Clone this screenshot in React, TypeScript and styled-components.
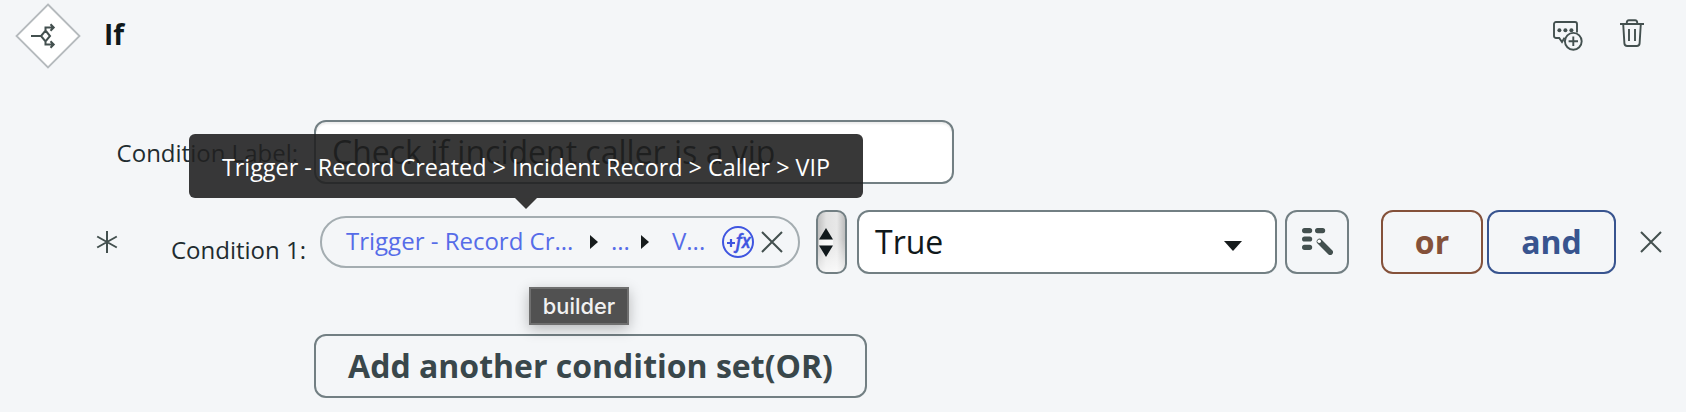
import React from 'react';
import styled, { createGlobalStyle } from 'styled-components';

const GlobalStyle = createGlobalStyle`
  body { margin: 0; background: #f4f6f8; }
  *, *::before, *::after { box-sizing: border-box; }
  button, input { font-family: inherit; }
`;

const Panel = styled.main`
  width: 1686px;
  height: 412px;
  overflow: hidden;
  background: #f4f6f8;
  color: #1f2c30;
  font: 24px/32px 'Open Sans', 'Noto Sans', sans-serif;
  white-space: nowrap;
`;

const Header = styled.header`
  display: flex;
  align-items: center;
  height: 72px;
  padding: 0 42px 0 15px;
`;

const Title = styled.h2`
  margin: -5px auto 0 23px;
  font-size: 28px;
  line-height: 38px;
  font-weight: 700;
  color: #10181b;
`;

const IconButton = styled.button<{ $gap?: number; $top?: number }>`
  display: flex;
  margin: 0 0 0 ${(p) => p.$gap ?? 0}px;
  padding: ${(p) => p.$top ?? 0}px 0 0;
  border: 0;
  background: none;
  color: #43504f;
`;

const HeaderActions = styled.div`
  display: flex;
  align-items: flex-start;
  height: 36px;
`;

const LabelRow = styled.div`
  display: flex;
  align-items: center;
  height: 64px;
  margin-top: 48px;
`;

const FieldLabel = styled.label<{ $width: number; $shift?: number }>`
  width: ${(p) => p.$width}px;
  margin-top: ${(p) => p.$shift ?? 0}px;
  text-align: right;
`;

const TextInput = styled.input`
  width: 640px;
  height: 64px;
  margin-left: 16px;
  padding: 0 16px 2px;
  border: 2px solid #727f83;
  border-radius: 12px;
  background: #fff;
  box-shadow: inset 0 2px 2px rgba(0, 0, 0, 0.08);
  color: #10181b;
  font-size: 32px;
`;

const ConditionRow = styled.div`
  display: flex;
  align-items: center;
  height: 64px;
  margin-top: 26px;
  padding-left: 96px;
`;

const Pill = styled.div`
  position: relative;
  display: flex;
  align-items: center;
  width: 480px;
  height: 52px;
  margin: -1px 0 0 14px;
  padding-left: 24px;
  border: 2px solid #a4adb1;
  border-radius: 26px;
`;

const Crumb = styled.span<{ $width: number }>`
  width: ${(p) => p.$width}px;
  margin-top: -2px;
  color: #566ce8;
`;

const PathArrow = styled.i<{ $after: number }>`
  margin-right: ${(p) => p.$after}px;
  border: solid transparent;
  border-width: 7px 0 7px 8px;
  border-left-color: #161b1c;
`;

const PathTooltip = styled.div`
  position: absolute;
  left: -133px;
  bottom: 68px;
  width: 674px;
  height: 64px;
  padding-top: 17px;
  border-radius: 6px;
  background: rgba(32, 32, 32, 0.895);
  color: #fff;
  font-size: 23.35px;
  text-align: center;

  &::after {
    content: '';
    position: absolute;
    top: 64px;
    left: 326px;
    border: solid transparent;
    border-width: 11px 11px 0;
    border-top-color: #373737;
  }
`;

const NativeHint = styled.div`
  position: absolute;
  left: 207px;
  top: 69px;
  width: 100px;
  height: 38px;
  border: 2px solid #6f6f6f;
  background: #515151;
  box-shadow: 0 4px 14px rgba(0, 0, 0, 0.26);
  color: #f1f1f1;
  font: 500 21.8px/34px Inter, sans-serif;
  text-align: center;
`;

const OperatorSelect = styled.div`
  display: flex;
  align-items: center;
  width: 31px;
  height: 64px;
  margin-left: 16px;
  padding-left: 1px;
  border: 2px solid #727f83;
  border-radius: 10px;
  background:
    linear-gradient(rgba(255, 255, 255, 0) 45%, rgba(255, 255, 255, 0.75)),
    linear-gradient(90deg, #bfbfbf, #e2e2e2 30%, #e8e8e8 70%, #bdbdbd);
`;

const ValueSelect = styled.div`
  display: flex;
  align-items: center;
  justify-content: space-between;
  width: 420px;
  height: 64px;
  margin-left: 10px;
  padding: 0 33px 0 16px;
  border: 2px solid #727f83;
  border-radius: 12px;
  background: #fff;
  color: #10181b;
  font-size: 32px;
`;

const Caret = styled.i`
  margin-top: 7px;
  border: solid transparent;
  border-width: 10px 9px 0;
  border-top-color: #161b1c;
`;

const OutlineButton = styled.button<{ $width: number; $color: string; $border: string; $left: number }>`
  display: flex;
  align-items: center;
  justify-content: center;
  width: ${(p) => p.$width}px;
  height: 64px;
  margin: 0 0 0 ${(p) => p.$left}px;
  padding: 0 0 2px;
  border: 2px solid ${(p) => p.$border};
  border-radius: 12px;
  background: none;
  color: ${(p) => p.$color};
  font-size: 32px;
  font-weight: 700;
`;

const Footer = styled.div`
  margin-top: 60px;
`;

const Cross = ({ size = 22 }: { size?: number }) => (
  <svg width={size} height={size} viewBox="0 0 22 22" fill="none" stroke="#43504f" strokeWidth="2">
    <path d="M1 1 21 21M21 1 1 21" />
  </svg>
);

const FlowIcon = () => (
  <svg width="66" height="66" viewBox="0 0 66 66" fill="none">
    <path d="M33 1.5 64.5 33 33 64.5 1.5 33Z" fill="#fff" stroke="#b5babd" strokeWidth="1.8" />
    <g stroke="#43504f" strokeWidth="2">
      <path d="M16 33H26M30.5 27.5 35 33 30.5 38.5 26 33ZM30.5 28V24.5H38M30.5 38V41.5H38M35.5 21.3 38.7 24.5 35.5 27.7M35.5 38.3 38.7 41.5 35.5 44.7" />
    </g>
  </svg>
);

const CommentIcon = () => (
  <svg width="30" height="30" viewBox="0 0 30 30" fill="none" stroke="#43504f" strokeWidth="1.9">
    <path d="M11.5 16.8 9 21 6.2 17H3A2 2 0 0 1 1 15V3A2 2 0 0 1 3 1H22A2 2 0 0 1 24 3V11.5" />
    <circle cx="20.3" cy="20.3" r="8.4" />
    <path d="M20.3 15.6V25M15.6 20.3H25" />
    <g fill="#43504f" stroke="none">
      <circle cx="6.4" cy="9.3" r="2" />
      <circle cx="12.4" cy="9.3" r="2" />
      <circle cx="18.4" cy="9.3" r="2" />
    </g>
  </svg>
);

const TrashIcon = () => (
  <svg width="24" height="29" viewBox="0 0 24 29" fill="none" stroke="#43504f" strokeWidth="1.9">
    <path d="M0 5H24M6.8 5V3.5A2.3 2.3 0 0 1 9 1.2H15A2.3 2.3 0 0 1 17.2 3.5V5M3.2 5 4.4 24.4A2.8 2.8 0 0 0 7.2 27H16.8A2.8 2.8 0 0 0 19.6 24.4L20.8 5M9 10V22M15 10V22" />
  </svg>
);

const RequiredIcon = () => (
  <svg width="22" height="22" viewBox="0 0 22 22" stroke="#43504f" strokeWidth="2">
    <path d="M11 0V22M1.2 5.5 20.8 16.5M20.8 5.5 1.2 16.5" />
  </svg>
);

const FormulaIcon = () => (
  <svg width="32" height="32" viewBox="0 0 32 32">
    <circle cx="16" cy="16" r="15" fill="none" stroke="#3f55e0" strokeWidth="2" />
    <path d="M5 17H13M9 13V21" stroke="#3f55e0" strokeWidth="2.2" />
    <text x="13.8" y="21.8" fill="#3f55e0" stroke="#3f55e0" strokeWidth="0.4" fontFamily="Open Sans, sans-serif" fontSize="19" fontWeight="600" fontStyle="italic" textLength="15" lengthAdjust="spacingAndGlyphs">fx</text>
  </svg>
);

const StepperArrows = () => (
  <svg width="14" height="29" viewBox="0 0 14 29">
    <rect y="11.5" width="14" height="6" fill="#fff" opacity=".7" />
    <path d="M0 11.5 7 0 14 11.5ZM0 17.5H14L7 29Z" fill="#10181b" />
  </svg>
);

const WandIcon = () => (
  <svg width="31" height="27" viewBox="0 0 31 27" fill="none" stroke="#43504f" strokeLinecap="round">
    <path d="M2.6 2.6H7.6M15.6 2.6H20.6M2.6 11H7.6M2.6 19.3H7.6" strokeWidth="5.2" />
    <path d="M17.5 13.5 28.2 24.2" strokeWidth="5.6" />
    <circle cx="17.2" cy="13.2" r="1.8" fill="#fff" stroke="none" />
  </svg>
);

export default function App() {
  return (
    <Panel>
      <GlobalStyle />
      <Header>
        <FlowIcon />
        <Title>If</Title>
        <HeaderActions>
          <IconButton aria-label="Add comment" $top={3}><CommentIcon /></IconButton>
          <IconButton aria-label="Delete" $gap={37} $top={1}><TrashIcon /></IconButton>
        </HeaderActions>
      </Header>

      <LabelRow>
        <FieldLabel $width={298} $shift={1}>Condition Label:</FieldLabel>
        <TextInput defaultValue="Check if incident caller is a vip" />
      </LabelRow>

      <ConditionRow>
        <RequiredIcon />
        <FieldLabel $width={188} $shift={16}>Condition 1:</FieldLabel>
        <Pill>
          <Crumb $width={244}>Trigger - Record Cr...</Crumb>
          <PathArrow $after={13} />
          <Crumb $width={30}>...</Crumb>
          <PathArrow $after={23} />
          <Crumb $width={50}>V...</Crumb>
          <FormulaIcon />
          <IconButton aria-label="Clear" $gap={7}><Cross /></IconButton>
          <PathTooltip>Trigger - Record Created &gt; Incident Record &gt; Caller &gt; VIP</PathTooltip>
          <NativeHint>builder</NativeHint>
        </Pill>
        <OperatorSelect><StepperArrows /></OperatorSelect>
        <ValueSelect>True<Caret /></ValueSelect>
        <OutlineButton aria-label="Transform" $width={64} $left={8} $color="#43504f" $border="#727f83"><WandIcon /></OutlineButton>
        <OutlineButton $width={102} $left={32} $color="#84513a" $border="#84513a">or</OutlineButton>
        <OutlineButton $width={129} $left={4} $color="#38548f" $border="#38548f">and</OutlineButton>
        <IconButton aria-label="Remove condition" $gap={24}><Cross /></IconButton>
      </ConditionRow>

      <Footer>
        <OutlineButton $width={553} $left={314} $color="#39474b" $border="#727f83">Add another condition set(OR)</OutlineButton>
      </Footer>
    </Panel>
  );
}
